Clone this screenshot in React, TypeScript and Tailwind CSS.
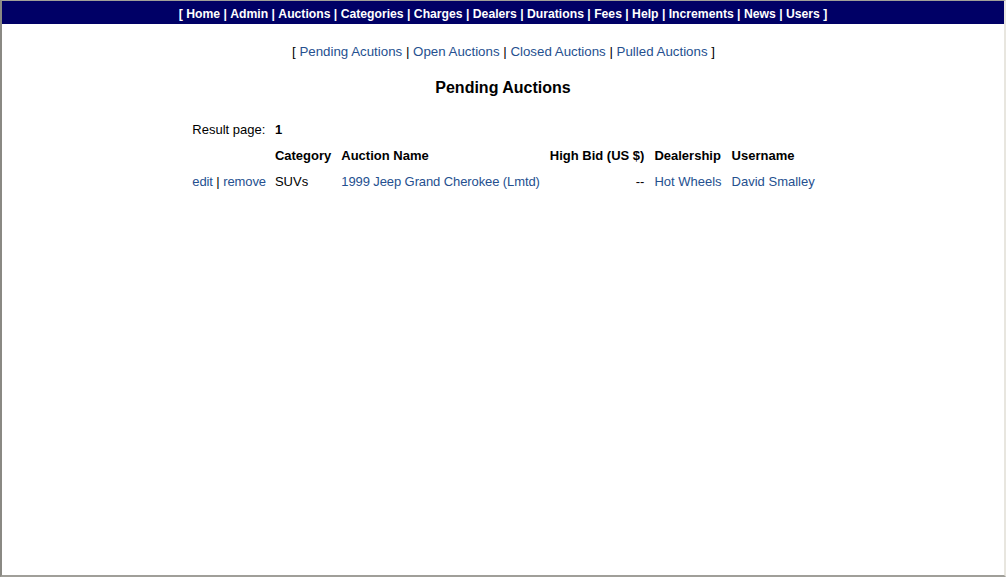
const mainNav = [
  "Home",
  "Admin",
  "Auctions",
  "Categories",
  "Charges",
  "Dealers",
  "Durations",
  "Fees",
  "Help",
  "Increments",
  "News",
  "Users",
];

const subNav = ["Pending Acutions", "Open Auctions", "Closed Auctions", "Pulled Auctions"];

const linkClass = "text-[#25508f] no-underline";

export default function App() {
  return (
    <div className="w-[1006px] h-[577px] bg-white font-['Liberation_Sans',Arial,sans-serif] text-black border-t border-t-[#a09f99] border-l-2 border-l-[#8a8983] border-r-2 border-r-[#e8e6df] border-b-2 border-b-[#a09f99] flex flex-col overflow-hidden">
      {/* top menu */}
      <div className="h-[23px] bg-[#000066] flex items-center justify-center pt-[3px] text-white text-[12.2px] font-bold">
        <span>[&nbsp;</span>
        {mainNav.map((item, i) => (
          <span key={item}>
            {i > 0 && <span>&nbsp;|&nbsp;</span>}
            <a href="#" className="text-white">
              {item}
            </a>
          </span>
        ))}
        <span>&nbsp;]</span>
      </div>

      {/* sub menu */}
      <div className="mt-[18px] flex justify-center text-[13.3px] pl-[1px]">
        <span>[&nbsp;</span>
        {subNav.map((item, i) => (
          <span key={item}>
            {i > 0 && <span>&nbsp;|&nbsp;</span>}
            <a href="#" className={linkClass}>
              {item}
            </a>
          </span>
        ))}
        <span>&nbsp;]</span>
      </div>

      <h1 className="mt-[16px] text-center text-[16px] font-bold leading-[19px]">Pending Auctions</h1>

      <div className="mt-[20px] flex justify-center pl-[1px]">
        <table className="text-[13px] border-separate border-spacing-x-[0px] border-spacing-y-[0px]">
          <tbody>
            <tr className="h-[26px]">
              <td className="pr-[9px] align-middle">Result page:</td>
              <td className="font-bold" colSpan={5}>
                1
              </td>
            </tr>
            <tr className="h-[26px] font-bold">
              <td></td>
              <td className="pr-[10px]">Category</td>
              <td className="pr-[10px]">Auction Name</td>
              <td className="pr-[10px]">High Bid (US $)</td>
              <td className="pr-[10px]">Dealership</td>
              <td>Username</td>
            </tr>
            <tr className="h-[26px]">
              <td className="pr-[9px] tracking-[-0.1px]">
                <a href="#" className={linkClass}>
                  edit
                </a>
                <span> | </span>
                <a href="#" className={linkClass}>
                  remove
                </a>
              </td>
              <td className="pr-[10px]">SUVs</td>
              <td className="pr-[10px]">
                <a href="#" className={`${linkClass} tracking-[-0.1px]`}>
                  1999 Jeep Grand Cherokee (Lmtd)
                </a>
              </td>
              <td className="pr-[10px] text-right">--</td>
              <td className="pr-[10px]">
                <a href="#" className={linkClass}>
                  Hot Wheels
                </a>
              </td>
              <td>
                <a href="#" className={linkClass}>
                  David Smalley
                </a>
              </td>
            </tr>
          </tbody>
        </table>
      </div>
    </div>
  );
}
